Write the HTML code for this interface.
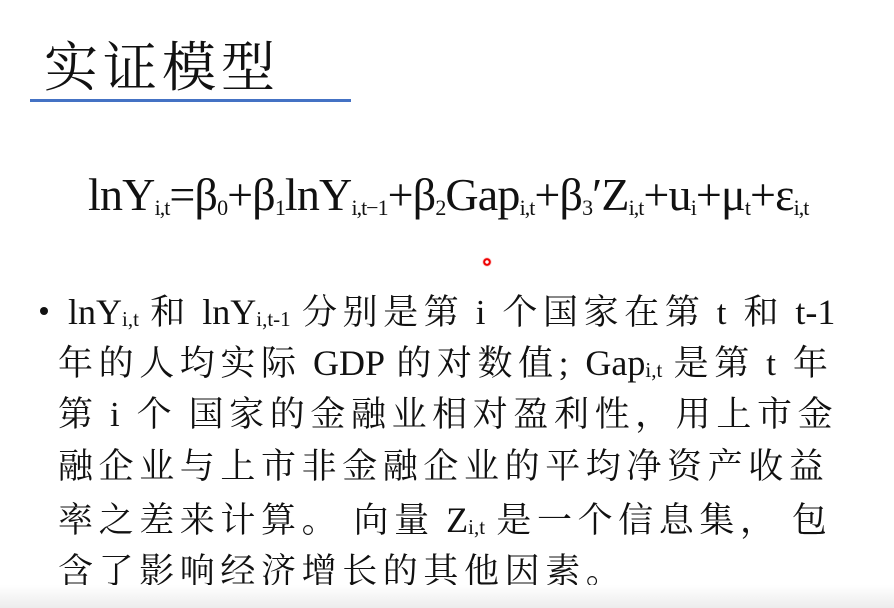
<!DOCTYPE html>
<html><head><meta charset="utf-8"><style>
html,body{margin:0;padding:0;}
body{width:894px;height:608px;position:relative;overflow:hidden;background:#fff;font-family:"Liberation Serif","Noto Serif CJK SC",serif;color:#111;}
.title{position:absolute;left:44px;top:28px;font-size:54px;letter-spacing:5px;font-family:"Noto Serif CJK SC",serif;line-height:72px;}
.bar{position:absolute;left:30px;top:99px;width:321px;height:3px;background:#4472c4;}
.eq{position:absolute;left:88px;top:168px;font-size:46px;line-height:54px;white-space:nowrap;letter-spacing:-0.8px;}
.eq sub{font-size:22px;vertical-align:-5px;letter-spacing:-1px}
.dot{position:absolute;left:482px;top:257px;width:10px;height:10px;border-radius:50%;background:radial-gradient(circle,#fff 0 1.5px,#e00 2px 3.5px,rgba(255,80,80,.4) 4px,rgba(255,255,255,0) 5px);}
.l{position:absolute;left:58px;font-size:35px;letter-spacing:5.6px;word-spacing:-3px;white-space:nowrap;line-height:52px;}
.l sub{font-size:21px;vertical-align:-2px;letter-spacing:0}
.lat{letter-spacing:0;font-size:36px}
.bullet{position:absolute;left:40px;top:307px;width:8px;height:8px;border-radius:50%;background:#111;}
.fade{position:absolute;left:0;top:585px;width:894px;height:23px;background:linear-gradient(#fff,#ececec);}
</style></head><body>
<div class="title">实证模型</div>
<div class="bar"></div>
<div class="eq">lnY<sub>i,t</sub>=β<sub>0</sub>+β<sub>1</sub>lnY<sub>i,t−1</sub>+β<sub>2</sub>Gap<sub>i,t</sub>+β<sub>3</sub>′Z<sub>i,t</sub>+u<sub>i</sub>+μ<sub>t</sub>+ε<sub>i,t</sub></div>
<div class="dot"></div>
<div class="bullet"></div>
<div class="l" style="top:286px;left:68px"><span class="lat">lnY</span><sub>i,t</sub> 和 <span class="lat">lnY</span><sub>i,t-1</sub> 分别是第 i 个国家在第 t 和 <span class="lat">t-1</span></div>
<div class="l" style="top:337px">年的人均实际 <span class="lat">GDP</span> 的对数值; <span class="lat">Gap</span><sub>i,t</sub> 是第 t 年</div>
<div class="l" style="top:389px">第 i 个 国家的金融业相对盈利性，用上市金</div>
<div class="l" style="top:441px">融企业与上市非金融企业的平均净资产收益</div>
<div class="l" style="top:494px">率之差来计算。 向量 <span class="lat">Z</span><sub>i,t</sub> 是一个信息集， 包</div>
<div class="l" style="top:546px">含了影响经济增长的其他因素。</div>
<div class="fade"></div>
</body></html>
